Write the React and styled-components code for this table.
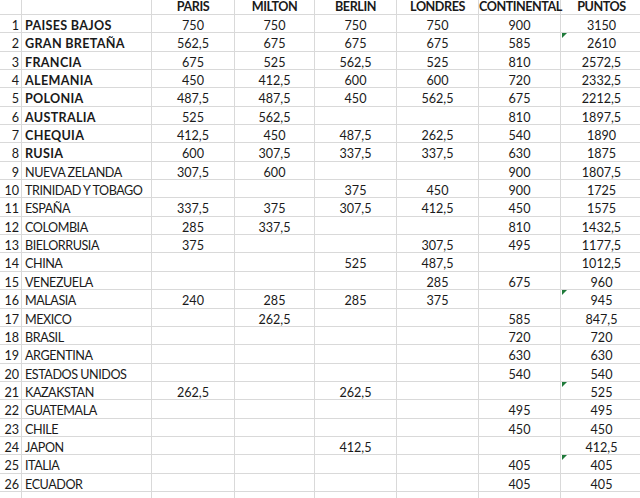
import React from "react";
import styled, { createGlobalStyle } from "styled-components";

const Global = createGlobalStyle`
  html, body { margin: 0; padding: 0; background: #fff; overflow: hidden; }
  body { font-family: Lato, "Liberation Sans", sans-serif; color: #1a1a1a; }
`;

const ROW_H = 18.35;

const Sheet = styled.div`
  display: grid;
  grid-template-columns: 22px 130px 83px 80px 82px 82px 82px 82px;
  grid-template-rows: 15px;
  grid-auto-rows: ${ROW_H}px;
  width: 643px;
  font-size: 12.6px;
`;

const Cell = styled.div`
  position: relative;
  box-sizing: border-box;
  border-right: 1px solid #d9d9d9;
  border-bottom: 1px solid #d9d9d9;
  white-space: nowrap;
  overflow: visible;
  padding-top: 3px;
  line-height: 15px;
`;

const HeadCell = styled(Cell)`
  padding-top: 0;
  line-height: 14px;
  font-weight: 700;
  text-align: center;
  letter-spacing: -0.45px;
`;

const RowNum = styled(Cell)`
  text-align: right;
  padding-right: 2px;
`;

const Name = styled(Cell)`
  padding-left: 3px;
  font-weight: ${(p) => (p.$bold ? 700 : 400)};
  letter-spacing: ${(p) => (p.$bold ? "0.3px" : "-0.45px")};
`;

const Num = styled(Cell)`
  text-align: center;
`;

const Flag = styled.span`
  position: absolute;
  left: 1px;
  top: 0;
  width: 0;
  height: 0;
  border-top: 5px solid #1f7a3a;
  border-right: 5px solid transparent;
`;

const headers = ["", "", "PARIS", "MILTON", "BERLIN", "LONDRES", "CONTINENTAL", "PUNTOS"];

const rows = [
  ["PAISES BAJOS", "750", "750", "750", "750", "900", "3150"],
  ["GRAN BRETAÑA", "562,5", "675", "675", "675", "585", "2610"],
  ["FRANCIA", "675", "525", "562,5", "525", "810", "2572,5"],
  ["ALEMANIA", "450", "412,5", "600", "600", "720", "2332,5"],
  ["POLONIA", "487,5", "487,5", "450", "562,5", "675", "2212,5"],
  ["AUSTRALIA", "525", "562,5", "", "", "810", "1897,5"],
  ["CHEQUIA", "412,5", "450", "487,5", "262,5", "540", "1890"],
  ["RUSIA", "600", "307,5", "337,5", "337,5", "630", "1875"],
  ["NUEVA ZELANDA", "307,5", "600", "", "", "900", "1807,5"],
  ["TRINIDAD Y TOBAGO", "", "", "375", "450", "900", "1725"],
  ["ESPAÑA", "337,5", "375", "307,5", "412,5", "450", "1575"],
  ["COLOMBIA", "285", "337,5", "", "", "810", "1432,5"],
  ["BIELORRUSIA", "375", "", "", "307,5", "495", "1177,5"],
  ["CHINA", "", "", "525", "487,5", "", "1012,5"],
  ["VENEZUELA", "", "", "", "285", "675", "960"],
  ["MALASIA", "240", "285", "285", "375", "", "945"],
  ["MEXICO", "", "262,5", "", "", "585", "847,5"],
  ["BRASIL", "", "", "", "", "720", "720"],
  ["ARGENTINA", "", "", "", "", "630", "630"],
  ["ESTADOS UNIDOS", "", "", "", "", "540", "540"],
  ["KAZAKSTAN", "262,5", "", "262,5", "", "", "525"],
  ["GUATEMALA", "", "", "", "", "495", "495"],
  ["CHILE", "", "", "", "", "450", "450"],
  ["JAPON", "", "", "412,5", "", "", "412,5"],
  ["ITALIA", "", "", "", "", "405", "405"],
  ["ECUADOR", "", "", "", "", "405", "405"],
];

const flagged = new Set([2, 16, 21, 25]);

export default function App() {
  return (
    <>
      <Global />
      <Sheet>
        {headers.map((h, i) => (
          <HeadCell key={"h" + i}>{h}</HeadCell>
        ))}
        {rows.map((r, i) => {
          const n = i + 1;
          return (
            <React.Fragment key={n}>
              <RowNum>{n}</RowNum>
              <Name $bold={n <= 8}>{r[0]}</Name>
              {r.slice(1).map((v, j) => (
                <Num key={j}>
                  {j === 5 && flagged.has(n) && <Flag />}
                  {v}
                </Num>
              ))}
            </React.Fragment>
          );
        })}
        {headers.map((_, i) => (
          <Cell key={"e" + i} />
        ))}
      </Sheet>
    </>
  );
}
